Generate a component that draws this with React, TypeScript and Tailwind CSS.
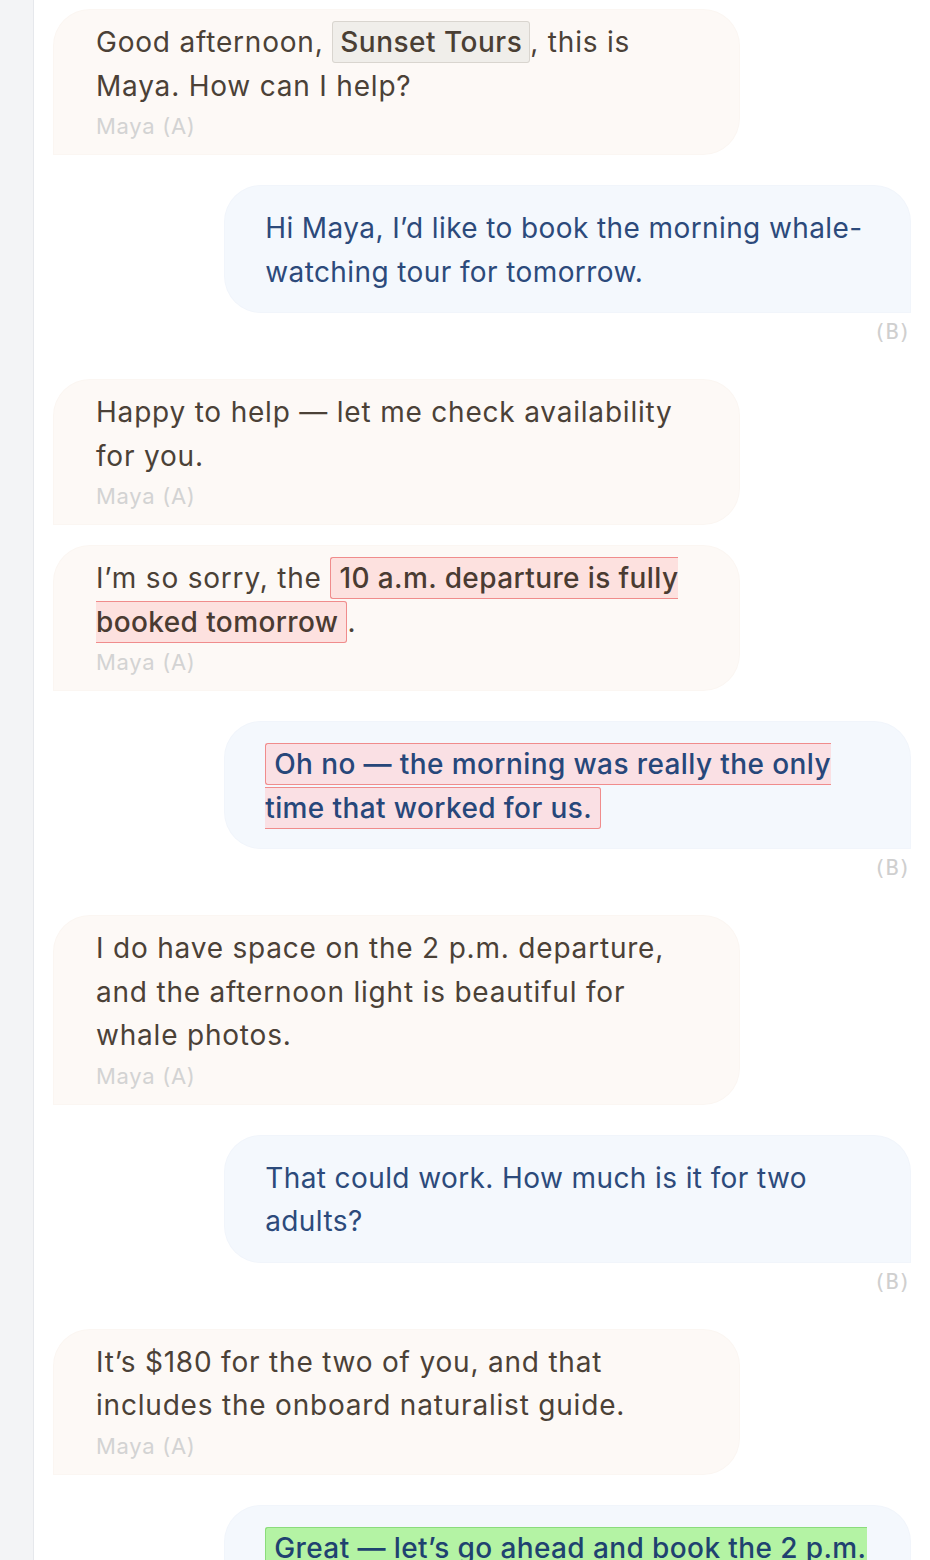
import React from "react";

type Seg = { t: string; k?: "brand" | "red" | "green" };
type Msg = { who: "A" | "B"; segs: Seg[] };

const messages: Msg[] = [
  {
    who: "A",
    segs: [
      { t: "Good afternoon, " },
      { t: "Sunset Tours", k: "brand" },
      { t: ", this is Maya. How can I help?" },
    ],
  },
  {
    who: "B",
    segs: [{ t: "Hi Maya, I’d like to book the morning whale-watching tour for tomorrow." }],
  },
  { who: "A", segs: [{ t: "Happy to help — let me check availability for you." }] },
  {
    who: "A",
    segs: [
      { t: "I’m so sorry, the " },
      { t: "10 a.m. departure is fully booked tomorrow", k: "red" },
      { t: "." },
    ],
  },
  {
    who: "B",
    segs: [{ t: "Oh no — the morning was really the only time that worked for us.", k: "red" }],
  },
  {
    who: "A",
    segs: [
      {
        t: "I do have space on the 2 p.m. departure, and the afternoon light is beautiful for whale photos.",
      },
    ],
  },
  { who: "B", segs: [{ t: "That could work. How much is it for two adults?" }] },
  {
    who: "A",
    segs: [{ t: "It’s $180 for the two of you, and that includes the onboard naturalist guide." }],
  },
  {
    who: "B",
    segs: [{ t: "Great — let’s go ahead and book the 2 p.m. tour.", k: "green" }],
  },
];

function Segment({ seg, side }: { seg: Seg; side: "A" | "B" }) {
  if (seg.k === "brand") {
    return (
      <span className="rounded-[3px] border border-[#d9d5cf] bg-[#f0eeea] px-[7px] py-[3px] font-medium tracking-[0.5px] text-[#4a3f34]">
        {seg.t}
      </span>
    );
  }
  if (seg.k === "red") {
    return (
      <span
        className={
          "rounded-[3px] border border-[#f08c8c] px-[8px] py-[3px] font-medium " +
          (side === "A"
            ? "bg-[#fde1df] tracking-[0.4px] text-[#4a3b32]"
            : "bg-[#fae0e4] text-[#27477a]")
        }
      >
        {seg.t}
      </span>
    );
  }
  if (seg.k === "green") {
    return (
      <span className="rounded-[3px] border border-[#8bdc7c] bg-[#b4f3a4] px-[8px] py-[3px] font-medium text-[#1f4270]">
        {seg.t}
      </span>
    );
  }
  return <span>{seg.t}</span>;
}

function Bubble({ msg, first }: { msg: Msg; first: boolean }) {
  const spacing = first ? "mt-0" : msg.who === "B" ? "mt-[32px]" : "mt-[22px]";
  if (msg.who === "A") {
    return (
      <div className={"flex justify-start " + spacing}>
        <div className="w-[80%] rounded-[36px] rounded-bl-none bg-[#fdf9f6] px-[42px] pb-[13px] pt-[11px] shadow-[0_0_0_1px_#fbf6f2]">
          <p className="text-[28px] leading-[43.5px] tracking-[0.8px] text-[#4b4137]">
            {msg.segs.map((s, i) => (
              <Segment key={i} seg={s} side="A" />
            ))}
          </p>
          <div className="mt-[3px] text-[22px] leading-[30px] tracking-[0.7px] text-[#d3d3d3]">Maya (A)</div>
        </div>
      </div>
    );
  }
  return (
    <div className={"flex flex-col items-end " + spacing}>
      <div className="w-[80%] rounded-[36px] rounded-br-none bg-[#f4f8fd] px-[40px] pb-[18px] pt-[21px] shadow-[0_0_0_1px_#f1f5fb]">
        <p className="text-[28px] leading-[43.5px] tracking-[0.4px] text-[#2c4a7b]">
          {msg.segs.map((s, i) => (
            <Segment key={i} seg={s} side="B" />
          ))}
        </p>
      </div>
      <div className="mb-[11px] mt-[5px] font-['DejaVu_Sans_Mono',monospace] text-[22px] leading-[30px] tracking-[-1px] text-[#cfcfcf]">
        (B)
      </div>
    </div>
  );
}

export default function App() {
  return (
    <div className="flex min-h-[1560px] bg-white font-['Inter',sans-serif]">
      <aside className="w-[34px] shrink-0 border-r border-[#e6e8ec] bg-[#f3f4f6]" />
      <main className="flex-1 px-5 pt-[10px] pb-10">
        {messages.map((m, i) => (
          <Bubble key={i} msg={m} first={i === 0} />
        ))}
      </main>
    </div>
  );
}
